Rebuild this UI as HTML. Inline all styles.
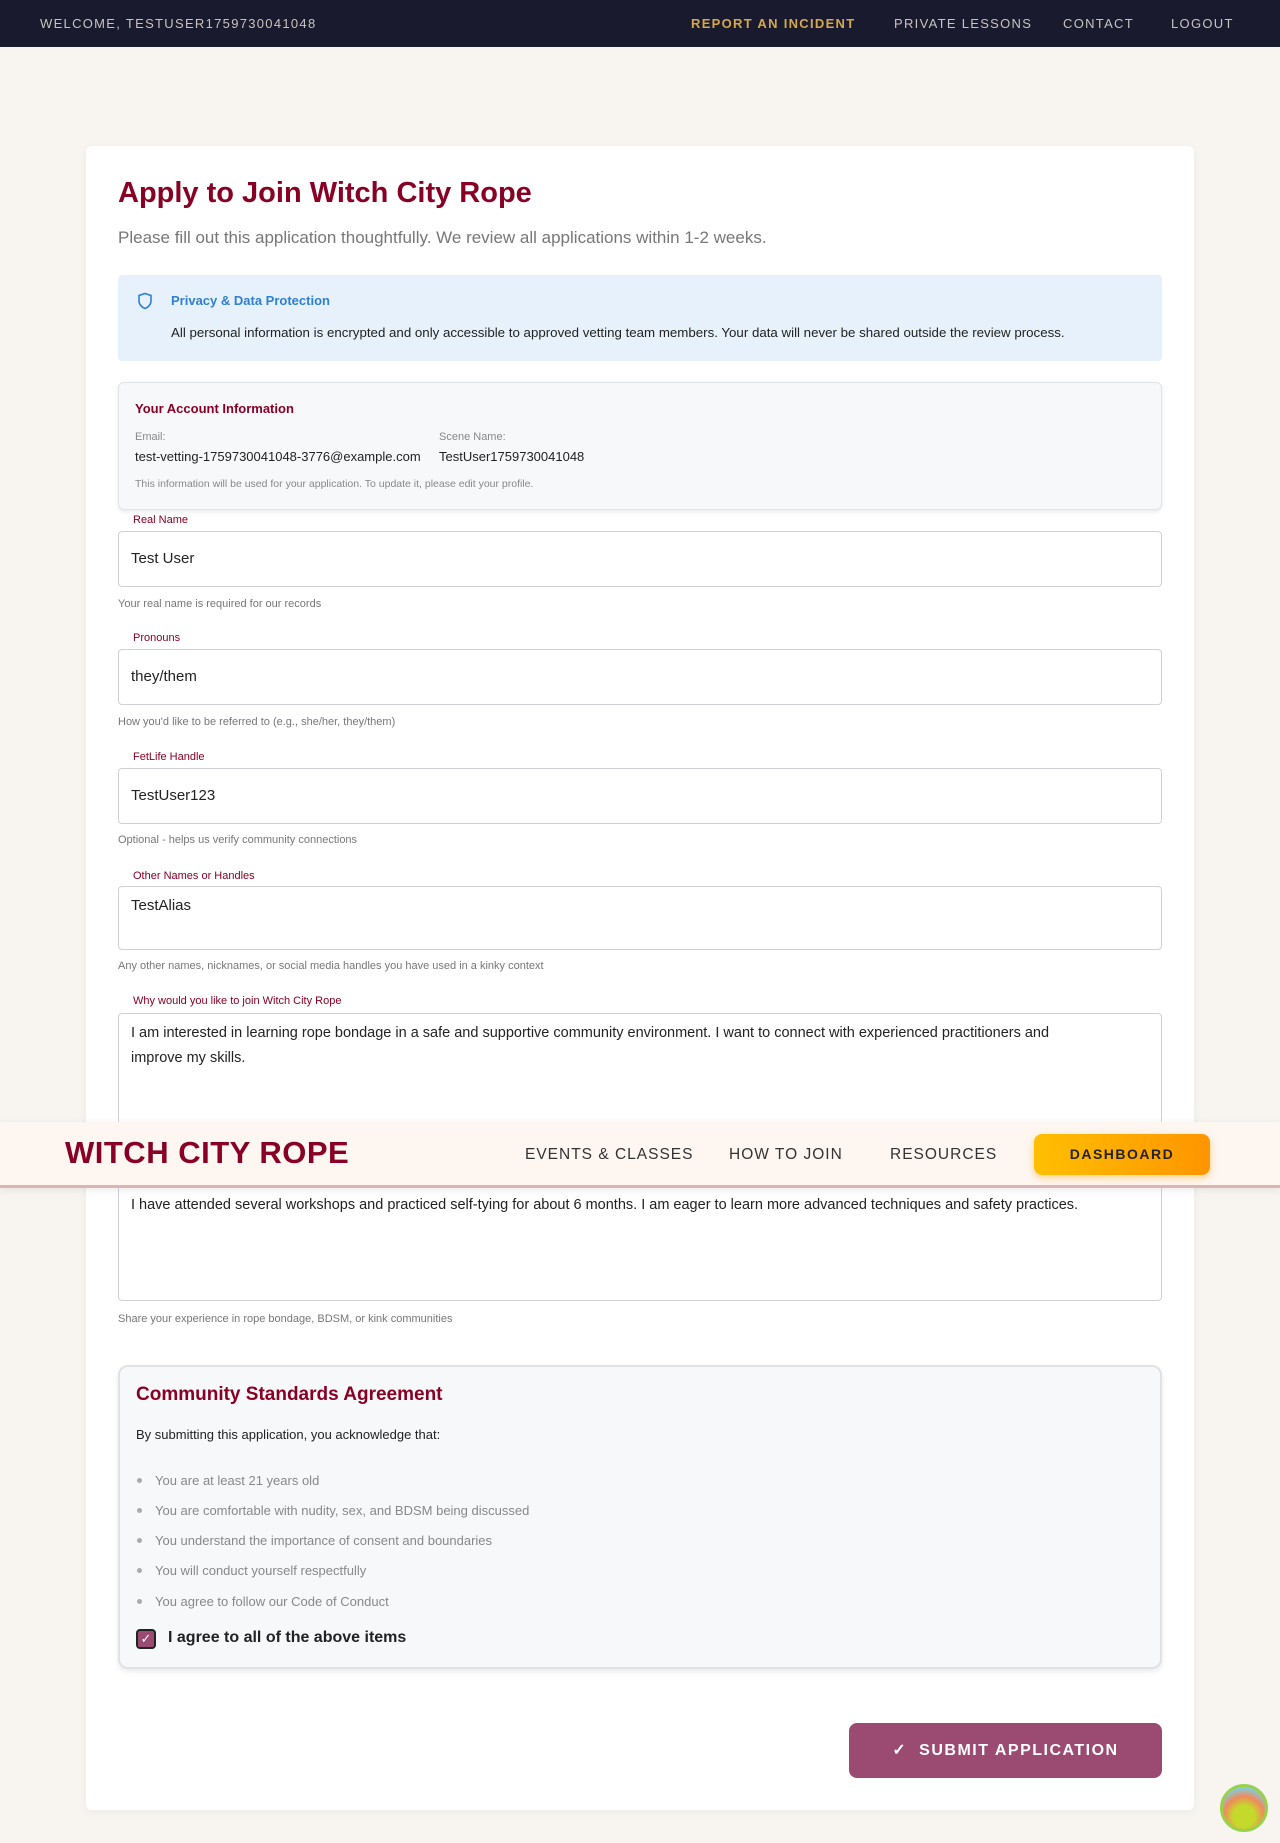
<!DOCTYPE html>
<html><head><meta charset="utf-8">
<style>
*{box-sizing:border-box;margin:0;padding:0}
body{width:1280px;height:1843px;background:#f8f5f1;font-family:"Liberation Sans",sans-serif;position:relative;overflow:hidden}
.a{position:absolute}
.top{left:0;top:0;width:1280px;height:47px;background:#1a1a2e;color:#c9c3bd;font-size:13px;letter-spacing:1.3px}
.top span{position:absolute;top:16px}
.card{left:86px;top:146px;width:1108px;height:1664px;background:#fff;border-radius:6px;box-shadow:0 2px 10px rgba(0,0,0,.05)}
.lbl{font-size:11px;color:#880124;left:133px}
.inp{left:118px;width:1044px;border:1px solid #cfd1d6;border-radius:4px;background:#fff;font-size:15px;color:#222;padding:0 12px}
.help{left:118px;font-size:11px;color:#777}
.li{left:155px;font-size:13px;color:#888}
.dot{left:137px;width:5px;height:5px;border-radius:50%;background:#aaa}
</style></head><body>
<div class="a top">
<span style="left:40px">WELCOME, TESTUSER1759730041048</span>
<span style="left:691px;color:#d4a84b;font-weight:bold">REPORT AN INCIDENT</span>
<span style="left:894px">PRIVATE LESSONS</span>
<span style="left:1063px">CONTACT</span>
<span style="left:1171px">LOGOUT</span>
</div>
<div class="a card"></div>
<div class="a" style="left:118px;top:177px;font-size:29px;font-weight:bold;color:#880124">Apply to Join Witch City Rope</div>
<div class="a" style="left:118px;top:228px;font-size:17px;color:#777">Please fill out this application thoughtfully. We review all applications within 1-2 weeks.</div>
<div class="a" style="left:118px;top:275px;width:1044px;height:86px;background:#e7f1fb;border-radius:4px"></div>
<svg class="a" style="left:137px;top:292px" width="16" height="18" viewBox="0 0 16 18"><path d="M8 1.5 L14 3.5 V9 C14 12.5 11 15.5 8 16.5 C5 15.5 2 12.5 2 9 V3.5 Z" fill="none" stroke="#2f80d1" stroke-width="1.6"/></svg>
<div class="a" style="left:171px;top:293px;font-size:13px;color:#2f80d1;font-weight:bold">Privacy &amp; Data Protection</div>
<div class="a" style="left:171px;top:325px;font-size:13.3px;color:#222">All personal information is encrypted and only accessible to approved vetting team members. Your data will never be shared outside the review process.</div>
<div class="a" style="left:118px;top:382px;width:1044px;height:128px;background:#f7f8fa;border:1px solid #dfe2e6;border-radius:6px;box-shadow:0 2px 4px rgba(0,0,0,.08)"></div>
<div class="a" style="left:135px;top:401px;font-size:13px;font-weight:bold;color:#880124">Your Account Information</div>
<div class="a" style="left:135px;top:431px;font-size:11px;color:#888">Email:</div>
<div class="a" style="left:439px;top:431px;font-size:11px;color:#888">Scene Name:</div>
<div class="a" style="left:135px;top:449px;font-size:13px;color:#222">test-vetting-1759730041048-3776@example.com</div>
<div class="a" style="left:439px;top:449px;font-size:13px;color:#222">TestUser1759730041048</div>
<div class="a" style="left:135px;top:478px;font-size:10.5px;color:#888">This information will be used for your application. To update it, please edit your profile.</div>

<div class="a lbl" style="top:514px">Real Name</div>
<div class="a inp" style="top:531px;height:56px;line-height:54px">Test User</div>
<div class="a help" style="top:598px">Your real name is required for our records</div>
<div class="a lbl" style="top:632px">Pronouns</div>
<div class="a inp" style="top:649px;height:56px;line-height:54px">they/them</div>
<div class="a help" style="top:716px">How you'd like to be referred to (e.g., she/her, they/them)</div>
<div class="a lbl" style="top:751px">FetLife Handle</div>
<div class="a inp" style="top:768px;height:56px;line-height:54px">TestUser123</div>
<div class="a help" style="top:834px">Optional - helps us verify community connections</div>
<div class="a lbl" style="top:870px">Other Names or Handles</div>
<div class="a inp" style="top:886px;height:64px;padding-top:10px">TestAlias</div>
<div class="a help" style="top:960px">Any other names, nicknames, or social media handles you have used in a kinky context</div>
<div class="a lbl" style="top:995px">Why would you like to join Witch City Rope</div>
<div class="a inp" style="top:1013px;height:140px;padding-top:7px;line-height:25px;font-size:14.5px"><div style="width:980px">I am interested in learning rope bondage in a safe and supportive community environment. I want to connect with experienced practitioners and<br>improve my skills.</div></div>
<div class="a inp" style="top:1170px;height:131px;padding-top:26px;font-size:14.5px">I have attended several workshops and practiced self-tying for about 6 months. I am eager to learn more advanced techniques and safety practices.</div>
<div class="a help" style="top:1313px">Share your experience in rope bondage, BDSM, or kink communities</div>

<div class="a" style="left:0;top:1122px;width:1280px;height:66px;background:#fdf6f1;border-bottom:3px solid #dcb4b4;box-shadow:0 2px 8px rgba(0,0,0,.08)"></div>
<div class="a" style="left:65px;top:1135px;font-size:31px;font-weight:bold;color:#880124;letter-spacing:0.5px">WITCH CITY ROPE</div>
<div class="a" style="left:525px;top:1146px;font-size:15.5px;color:#333;letter-spacing:1px">EVENTS &amp; CLASSES</div>
<div class="a" style="left:729px;top:1146px;font-size:15.5px;color:#333;letter-spacing:1px">HOW TO JOIN</div>
<div class="a" style="left:890px;top:1146px;font-size:15.5px;color:#333;letter-spacing:1px">RESOURCES</div>
<div class="a" style="left:1034px;top:1134px;width:176px;height:41px;border-radius:8px;background:linear-gradient(90deg,#ffbf00,#ff9500);box-shadow:0 3px 8px rgba(255,160,0,.4);text-align:center;line-height:41px;font-size:14px;font-weight:bold;letter-spacing:1.5px;color:#222">DASHBOARD</div>

<div class="a" style="left:118px;top:1365px;width:1044px;height:304px;background:#f7f8fa;border:2px solid #dfe2e6;border-radius:10px;box-shadow:0 3px 6px rgba(0,0,0,.08)"></div>
<div class="a" style="left:136px;top:1384px;font-size:19px;font-weight:bold;color:#880124">Community Standards Agreement</div>
<div class="a" style="left:136px;top:1427px;font-size:13px;color:#222">By submitting this application, you acknowledge that:</div>
<div class="a dot" style="top:1478px"></div><div class="a li" style="top:1473px">You are at least 21 years old</div>
<div class="a dot" style="top:1508px"></div><div class="a li" style="top:1503px">You are comfortable with nudity, sex, and BDSM being discussed</div>
<div class="a dot" style="top:1538px"></div><div class="a li" style="top:1533px">You understand the importance of consent and boundaries</div>
<div class="a dot" style="top:1568px"></div><div class="a li" style="top:1563px">You will conduct yourself respectfully</div>
<div class="a dot" style="top:1599px"></div><div class="a li" style="top:1594px">You agree to follow our Code of Conduct</div>
<div class="a" style="left:136px;top:1629px;width:20px;height:20px;border:2px solid #222;border-radius:4px;background:#9b4a72;color:#fff;font-size:13px;text-align:center;line-height:16px">✓</div>
<div class="a" style="left:168px;top:1629px;font-size:16px;font-weight:bold;color:#222">I agree to all of the above items</div>

<div class="a" style="left:849px;top:1723px;width:313px;height:55px;border-radius:8px;background:#9b4a72;color:#fff;font-size:16px;font-weight:bold;letter-spacing:1.5px;text-align:center;line-height:55px">✓&nbsp; SUBMIT APPLICATION</div>
<div class="a" style="left:1220px;top:1784px;width:48px;height:48px;border-radius:50%;background:radial-gradient(circle at 50% 70%,#c4d92b 30%,#f08a5d 55%,#7fd0e0 80%);border:3px solid #9bd14a"></div>
</body></html>
